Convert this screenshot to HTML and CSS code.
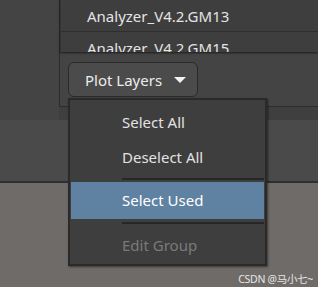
FILE: index.html
```html
<!DOCTYPE html>
<html>
<head>
<meta charset="utf-8">
<link rel="stylesheet" href="styles.css">
</head>
<body>
<div class="top">
  <div class="gutter"></div>
  <div class="panel-wrap">
    <div class="panel">
      <div class="list">
        <div class="row">Analyzer_V4.2.GM13</div>
        <div class="row">Analyzer_V4.2.GM15</div>
      </div>
      <div class="btn-area">
        <div class="btn">Plot Layers <span class="caret"></span></div>
      </div>
    </div>
    <div class="under"></div>
  </div>
</div>
<div class="band"></div>
<div class="bottom">
  <span class="mark">CSDN @马小七~</span>
</div>
<div class="menu">
  <div class="item">Select All</div>
  <div class="item">Deselect All</div>
  <div class="sep"></div>
  <div class="item active">Select Used</div>
  <div class="sep"></div>
  <div class="item disabled">Edit Group</div>
</div>
</body>
</html>
```
FILE: styles.css
```css
html, body {
  margin: 0;
  padding: 0;
}
body {
  width: 318px;
  height: 287px;
  overflow: hidden;
  position: relative;
  background: #6f6b68;
  font-family: "Noto Sans", "Open Sans", sans-serif;
  display: flex;
  flex-direction: column;
}
.top {
  height: 120px;
  display: flex;
  background: #444444;
}
.gutter {
  width: 59px;
  flex: none;
}
.panel-wrap {
  flex: 1;
  display: flex;
  flex-direction: column;
}
.panel {
  height: 107px;
  border-left: 1px solid #2c2c2c;
  border-bottom: 1px solid #2c2c2c;
  box-sizing: border-box;
  background: #444444;
  display: flex;
  flex-direction: column;
}
.under {
  flex: 1;
  background: #3f3f3f;
}
.list {
  height: 52px;
  overflow: hidden;
  background: #3e3e3e;
  border-left: 1px solid #353535;
  box-shadow: 0 1px 2px rgba(0,0,0,0.6);
}
.row {
  height: 31px;
  border-bottom: 1px solid #2e2e2e;
  padding-left: 26px;
  color: #e4e4e4;
  font-size: 15px;
  line-height: 33px;
  white-space: nowrap;
}
.btn-area {
  padding: 10px 0 0 8px;
}
.btn {
  box-sizing: border-box;
  width: 130px;
  height: 35px;
  border: 1px solid #2a2a2a;
  border-radius: 6px;
  background: #4b4b4b;
  color: #ececec;
  font-size: 15px;
  padding-left: 16px;
  display: flex;
  align-items: center;
}
.caret {
  display: inline-block;
  width: 0;
  height: 0;
  border-left: 6px solid transparent;
  border-right: 6px solid transparent;
  border-top: 6px solid #f2f2f2;
  margin-left: 12px;
  margin-top: 1px;
}
.band {
  height: 61px;
  background: #4a4a4a;
  border-bottom: 2px solid #2f2f2f;
}
.bottom {
  flex: 1;
  display: flex;
  justify-content: flex-end;
  align-items: flex-end;
  padding: 0 5px 0 0;
}
.mark {
  font-family: "Noto Sans", "Noto Sans CJK SC", sans-serif;
  font-size: 10.5px;
  color: #e8e6e4;
  line-height: 13px;
  margin-bottom: 1px;
  letter-spacing: -0.3px;
}
.menu {
  position: absolute;
  left: 68px;
  top: 98px;
  width: 199px;
  height: 168px;
  box-sizing: border-box;
  border: 2px solid #2a2a2a;
  background: #3e3e3e;
  padding-top: 5px;
  box-shadow: 1px 1px 2px rgba(0,0,0,0.5);
}
.item {
  height: 35px;
  line-height: 35px;
  margin: 0 1px;
  padding-left: 51px;
  color: #e2e2e2;
  font-size: 15px;
}
.item.active {
  height: 37px;
  line-height: 37px;
  background: #5f82a2;
  color: #ffffff;
}
.item.disabled {
  color: #7a7a7a;
  margin-top: 4px;
}
.sep {
  height: 2px;
  margin: 3px 1px 2px 52px;
  background: #262626;
}
```
